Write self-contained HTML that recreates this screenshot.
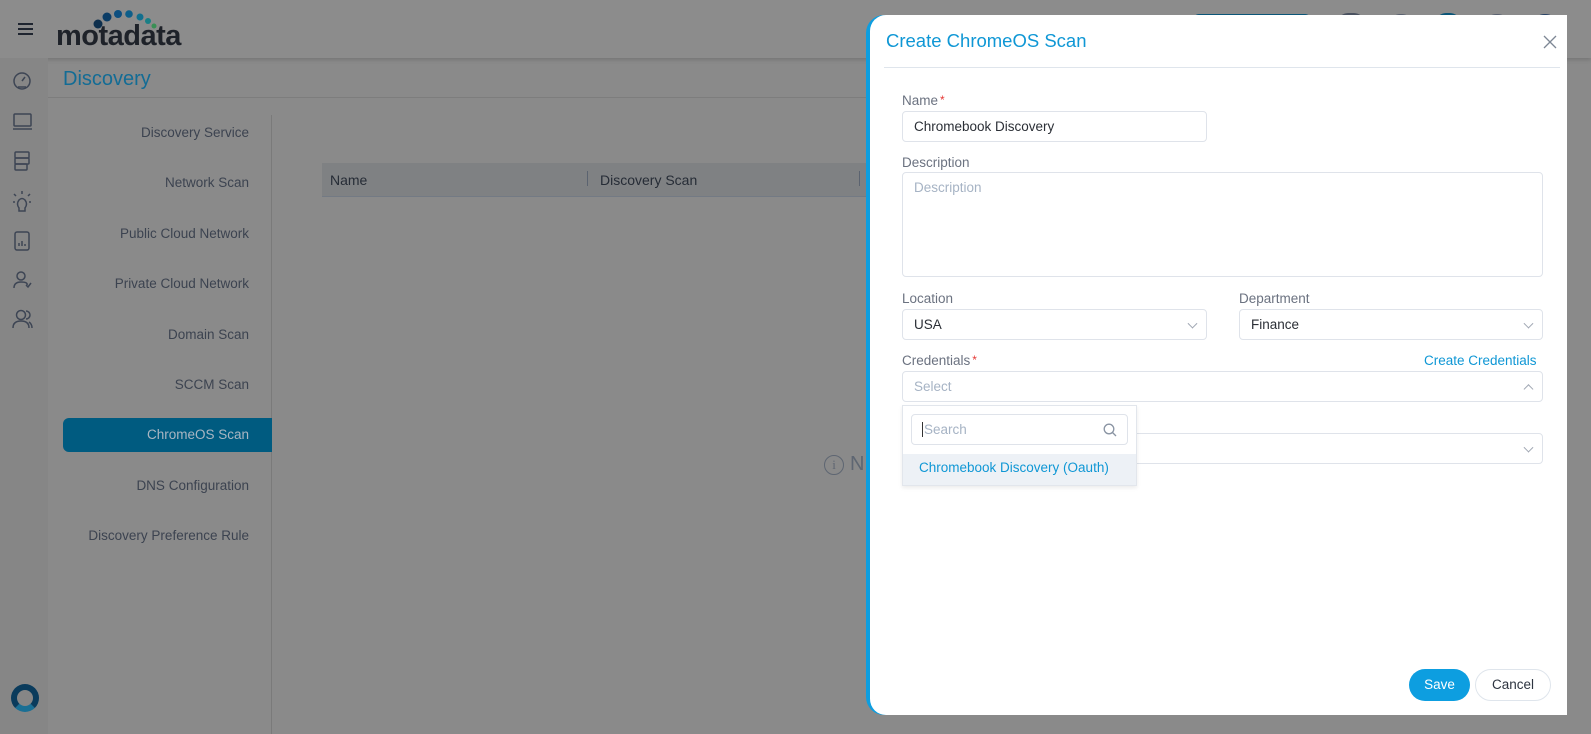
<!DOCTYPE html>
<html><head><style>
*{box-sizing:border-box;margin:0;padding:0}
body{width:1591px;height:734px;overflow:hidden;background:#8a8a8a;font-family:"Liberation Sans",sans-serif;position:relative}
.abs{position:absolute}
.menu{position:absolute;right:calc(1591px - 249px);font-size:13.5px;color:#3c4350;white-space:nowrap}
.lbl{position:absolute;font-size:13.5px;color:#6b7280}
.inp{position:absolute;border:1px solid #dfe3ea;border-radius:4px;background:#fff;font-size:13.5px;color:#2b2f36;padding-left:11px;display:flex;align-items:center}
.chev{position:absolute;right:10px;top:50%;width:7px;height:7px;border-right:1px solid #a0a7b3;border-bottom:1px solid #a0a7b3;transform:translateY(-70%) rotate(45deg)}
.star{color:#e53935;font-size:12px;vertical-align:top;margin-left:2px}
</style></head><body>
<div class="abs" style="left:0;top:0;width:1591px;height:58px;background:#8c8c8c;box-shadow:0 2px 4px rgba(0,0,0,.15)"></div>
<div class="abs" style="left:18px;top:23px;width:15px;height:2px;background:#1f2530;box-shadow:0 5px 0 #1f2530,0 10px 0 #1f2530"></div>
<div class="abs" style="left:56px;top:20px;font-size:29px;font-weight:bold;color:#1e2229;letter-spacing:-0.5px">motadata</div>
<svg class="abs" style="left:90px;top:8px" width="80" height="24"><circle cx="8" cy="16" r="4.5" fill="#0d2f4d"/><circle cx="17" cy="9" r="4.5" fill="#0c3d66"/><circle cx="28" cy="6" r="4" fill="#0d4f80"/><circle cx="39" cy="6" r="3.8" fill="#0d5e8a"/><circle cx="50" cy="9" r="3.5" fill="#126f8e"/><circle cx="58" cy="13" r="3" fill="#1a7f86"/><circle cx="64" cy="18" r="2.5" fill="#3a8f55"/></svg>
<div class="abs" style="left:1193px;top:14px;width:118px;height:10px;border-radius:6px 6px 0 0;background:#0b5678"></div>
<div class="abs" style="left:1338px;top:13px;width:26px;height:10px;border-radius:13px 13px 0 0;background:#4a5260"></div>
<div class="abs" style="left:1390px;top:14px;width:22px;height:10px;border-radius:11px 11px 0 0;background:#5a6270"></div>
<div class="abs" style="left:1436px;top:13px;width:24px;height:10px;border-radius:12px 12px 0 0;background:#0b5678"></div>
<div class="abs" style="left:1486px;top:14px;width:22px;height:10px;border-radius:11px 11px 0 0;background:#5a6270"></div>
<div class="abs" style="left:1534px;top:14px;width:22px;height:10px;border-radius:11px 11px 0 0;background:#2a4466"></div>
<div class="abs" style="left:0;top:58px;width:48px;height:676px;background:#868686"></div>
<svg class="abs" style="left:12px;top:70px" width="22" height="270" fill="none" stroke="#3d4554" stroke-width="1.5">
<circle cx="10" cy="11" r="8"/><path d="M10 11l3-4M6 17h8"/>
<rect x="2" y="44" width="17" height="12" rx="1"/><path d="M1 59h19"/>
<rect x="3" y="82" width="14" height="6" rx="1"/><rect x="3" y="88" width="14" height="6" rx="1"/><rect x="3" y="94" width="12" height="6" rx="1"/>
<path d="M7 138q-3-4 0-8 3-3 6 0 3 4 0 8v3h-6z M10 124v-3M3 132h-2M17 132h2M4 126l-2-2M16 126l2-2"/>
<rect x="3" y="162" width="14" height="18" rx="2"/><path d="M7 176v-3M10 176v-5M13 176v-2"/>
<circle cx="9" cy="206" r="4"/><path d="M2 218q0-6 7-6t6 3M14 215l2 2 3-4"/>
<circle cx="9" cy="245" r="4.5"/><path d="M1 258q0-7 8-7t8 7M14 241a4 4 0 0 1 0 8M17 252q3 2 3 6"/>
</svg>
<div class="abs" style="left:11px;top:684px;width:28px;height:28px;border-radius:50%;border:6px solid #0a3b5c;border-bottom-color:#1a6f94"></div>
<div class="abs" style="left:63px;top:68px;font-size:20px;color:#136c95">Discovery</div>
<div class="abs" style="left:48px;top:97px;width:830px;height:1px;background:#7d7d7d"></div>
<div class="abs" style="left:271px;top:115px;width:1px;height:619px;background:#7a7a7a"></div>
<div class="menu" style="top:125px">Discovery Service</div>
<div class="menu" style="top:175px">Network Scan</div>
<div class="menu" style="top:226px">Public Cloud Network</div>
<div class="menu" style="top:276px">Private Cloud Network</div>
<div class="menu" style="top:327px">Domain Scan</div>
<div class="menu" style="top:377px">SCCM Scan</div>
<div class="abs" style="left:63px;top:418px;width:209px;height:34px;border-radius:6px 0 0 6px;background:#005b80"></div>
<div class="menu" style="top:427px;color:#a9b6c2">ChromeOS Scan</div>
<div class="menu" style="top:478px">DNS Configuration</div>
<div class="menu" style="top:528px">Discovery Preference Rule</div>
<div class="abs" style="left:322px;top:163px;width:546px;height:34px;background:#7f8183;border-bottom:1px solid #737a84"></div>
<div class="abs" style="left:330px;top:172px;font-size:14px;color:#262c36">Name</div>
<div class="abs" style="left:587px;top:171px;width:1px;height:15px;background:#5b6370"></div>
<div class="abs" style="left:600px;top:172px;font-size:14px;color:#262c36">Discovery Scan</div>
<div class="abs" style="left:859px;top:171px;width:1px;height:15px;background:#5b6370"></div>
<div class="abs" style="left:824px;top:455px;width:20px;height:20px;border-radius:50%;border:1.5px solid #5e6672;font-size:13px;color:#5e6672;text-align:center;line-height:17px;font-family:'Liberation Serif',serif">i</div>
<div class="abs" style="left:850px;top:453px;font-size:20px;color:#5e6672">N</div>
<div class="abs" style="left:866px;top:15px;width:701px;height:700px;background:#0d9ee0;border-radius:18px 0 0 18px"></div>
<div class="abs" style="left:870px;top:15px;width:697px;height:700px;background:#fff;border-radius:16px 0 0 16px"></div>
<div class="abs" style="left:886px;top:30px;font-size:18.5px;color:#0f97d5">Create ChromeOS Scan</div>
<svg class="abs" style="left:1543px;top:35px" width="14" height="14" stroke="#7d8795" stroke-width="1.3"><path d="M1 1l12 12M13 1L1 13"/></svg>
<div class="abs" style="left:884px;top:67px;width:676px;height:1px;background:#dfe5ec"></div>
<div class="lbl" style="left:902px;top:93px">Name<span class="star">*</span></div>
<div class="inp" style="left:902px;top:111px;width:305px;height:31px">Chromebook Discovery</div>
<div class="lbl" style="left:902px;top:155px">Description</div>
<div class="inp" style="left:902px;top:172px;width:641px;height:105px;align-items:flex-start;padding-top:7px;color:#a6b3c4">Description</div>
<div class="lbl" style="left:902px;top:291px">Location</div>
<div class="inp" style="left:902px;top:309px;width:305px;height:31px">USA<span class="chev"></span></div>
<div class="lbl" style="left:1239px;top:291px">Department</div>
<div class="inp" style="left:1239px;top:309px;width:304px;height:31px">Finance<span class="chev"></span></div>
<div class="lbl" style="left:902px;top:353px">Credentials<span class="star">*</span></div>
<div class="abs" style="left:1424px;top:353px;font-size:13.5px;color:#0f97d5">Create Credentials</div>
<div class="inp" style="left:902px;top:371px;width:641px;height:31px;color:#a6b3c4">Select<span class="chev" style="transform:translateY(-20%) rotate(225deg)"></span></div>
<div class="inp" style="left:902px;top:433px;width:641px;height:31px"><span class="chev"></span></div>
<div class="abs" style="left:902px;top:405px;width:235px;height:81px;background:#fff;border:1px solid #e2e6ec;box-shadow:0 2px 4px rgba(0,0,0,.08)"></div>
<div class="inp" style="left:911px;top:414px;width:217px;height:31px;color:#a6b3c4;padding-left:10px"><span style="border-left:1px solid #333;padding-left:1px">Search</span>
<svg class="abs" style="right:10px;top:8px" width="14" height="14" fill="none" stroke="#8a94a3" stroke-width="1.3"><circle cx="6" cy="6" r="4.8"/><path d="M9.5 9.5l3.5 3.5"/></svg></div>
<div class="abs" style="left:903px;top:454px;width:233px;height:31px;background:#edf1f6;font-size:13.5px;color:#0f97d5;padding:6px 0 0 16px">Chromebook Discovery (Oauth)</div>
<div class="abs" style="left:1409px;top:669px;width:61px;height:32px;border-radius:16px;background:#0d9ee0;color:#fff;font-size:13.5px;text-align:center;line-height:32px">Save</div>
<div class="abs" style="left:1475px;top:669px;width:76px;height:32px;border-radius:16px;border:1px solid #dfe5ec;color:#2d3440;font-size:13.5px;text-align:center;line-height:30px">Cancel</div>
</body></html>
